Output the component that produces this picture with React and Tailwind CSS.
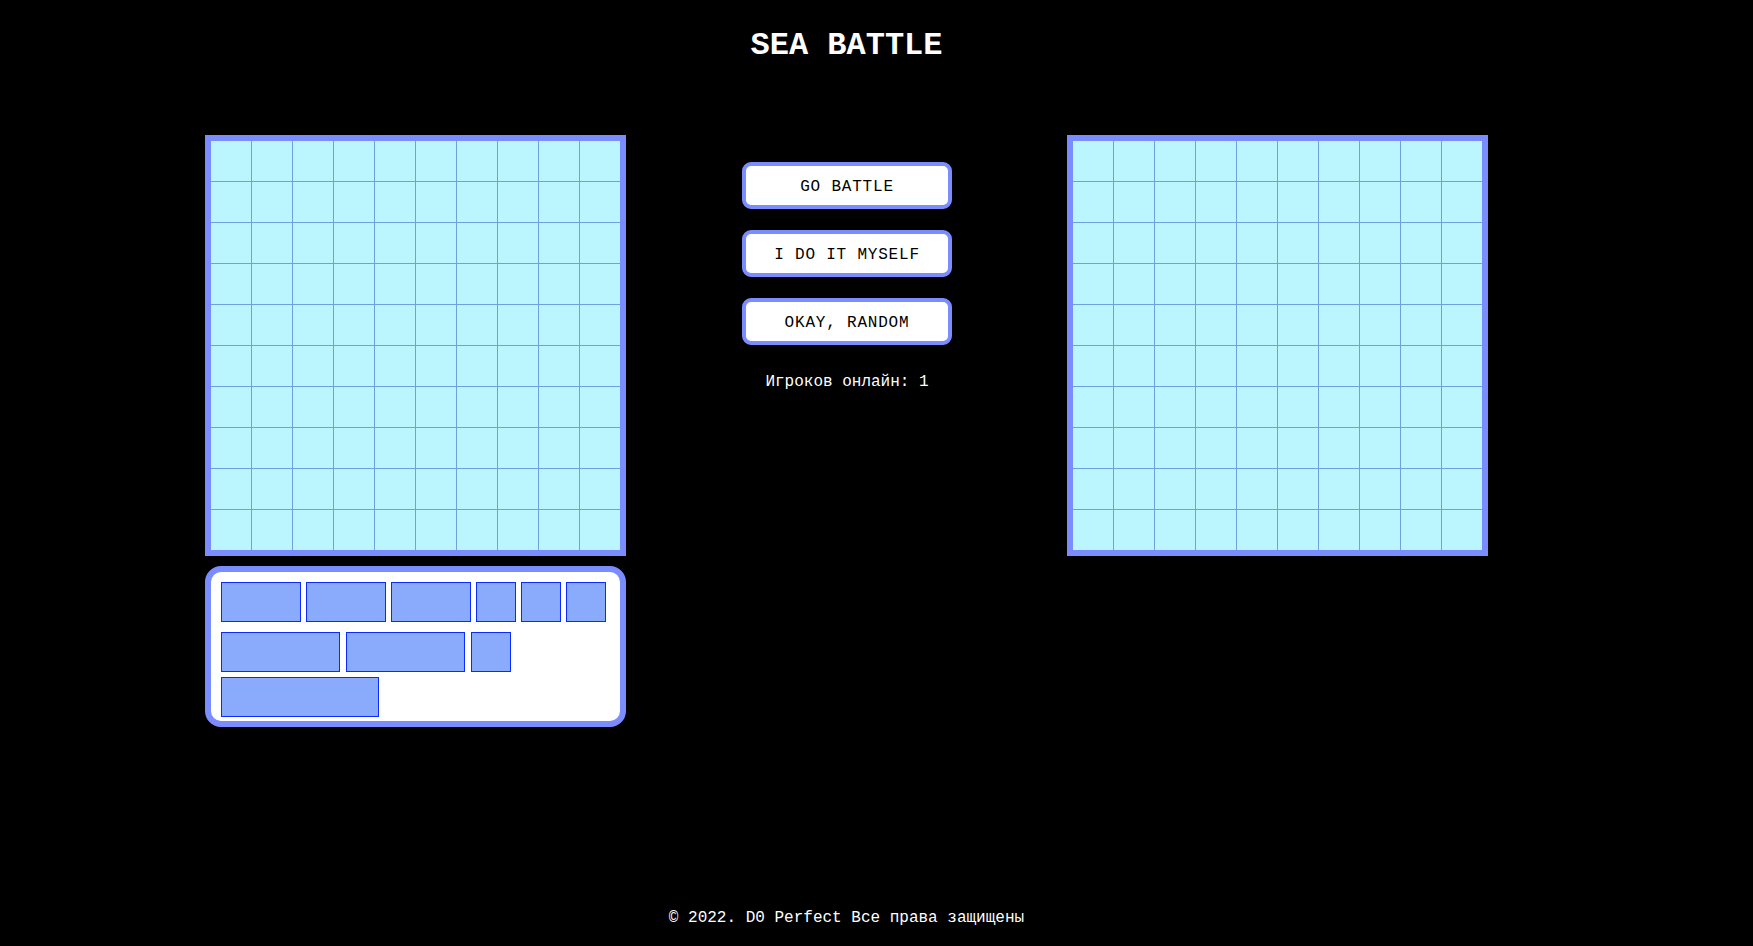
import React from "react";

const MONO = { fontFamily: '"Liberation Mono", "DejaVu Sans Mono", monospace' };

function Board() {
  const cells = Array.from({ length: 100 });
  return (
    <div className="border-[6px] border-[#7b8cff] bg-[#6fa0e0] w-[421px] h-[421px]">
      <div className="grid grid-cols-10 gap-px">
        {cells.map((_, i) => (
          <div key={i} className="w-10 h-10 bg-[#bbf6fe]" />
        ))}
      </div>
    </div>
  );
}

function Ship({ w }) {
  return <div className={`h-10 border border-[#0a2aff] bg-[#8aaafc] ${w}`} />;
}

function Btn({ children }) {
  return (
    <button
      className="w-[210px] h-[47px] bg-white border-4 border-[#7b8cff] rounded-[9px] text-black text-[16px] tracking-[0.8px] flex items-center justify-center pt-[2px]"
      style={MONO}
    >
      {children}
    </button>
  );
}

export default function App() {
  return (
    <div className="bg-black min-h-[946px] w-full flex flex-col text-white" style={MONO}>
      <div className="w-[1693px] flex flex-col">
        <h1 className="h-[90px] flex items-center justify-center text-[32px] font-bold pt-[2px]">
          SEA BATTLE
        </h1>
        <div className="pt-[45px] flex justify-center items-start">
          <div className="flex flex-col">
            <Board />
            <div className="mt-[10px] w-[421px] border-[6px] border-[#7b8cff] rounded-[16px] bg-white pt-[10px] pb-[4px] px-[10px] flex flex-col">
              <div className="flex gap-[5px]">
                <Ship w="w-20" />
                <Ship w="w-20" />
                <Ship w="w-20" />
                <Ship w="w-10" />
                <Ship w="w-10" />
                <Ship w="w-10" />
              </div>
              <div className="flex gap-[6px] mt-[10px]">
                <Ship w="w-[119px]" />
                <Ship w="w-[119px]" />
                <Ship w="w-10" />
              </div>
              <div className="flex mt-[5px]">
                <Ship w="w-[158px]" />
              </div>
            </div>
          </div>
          <div className="flex flex-col items-center pt-[27px] ml-[116px] mr-[115px]">
            <Btn>GO BATTLE</Btn>
            <div className="h-[21px]" />
            <Btn>I DO IT MYSELF</Btn>
            <div className="h-[21px]" />
            <Btn>OKAY, RANDOM</Btn>
            <div className="mt-[25px] text-[16px] leading-[24px]">Игроков онлайн: 1</div>
          </div>
          <Board />
        </div>
      </div>
      <div className="flex-1" />
      <div className="w-[1693px] text-center text-[16px] leading-[24px] pb-[16px]">
        © 2022. D0 Perfect Все права защищены
      </div>
    </div>
  );
}
